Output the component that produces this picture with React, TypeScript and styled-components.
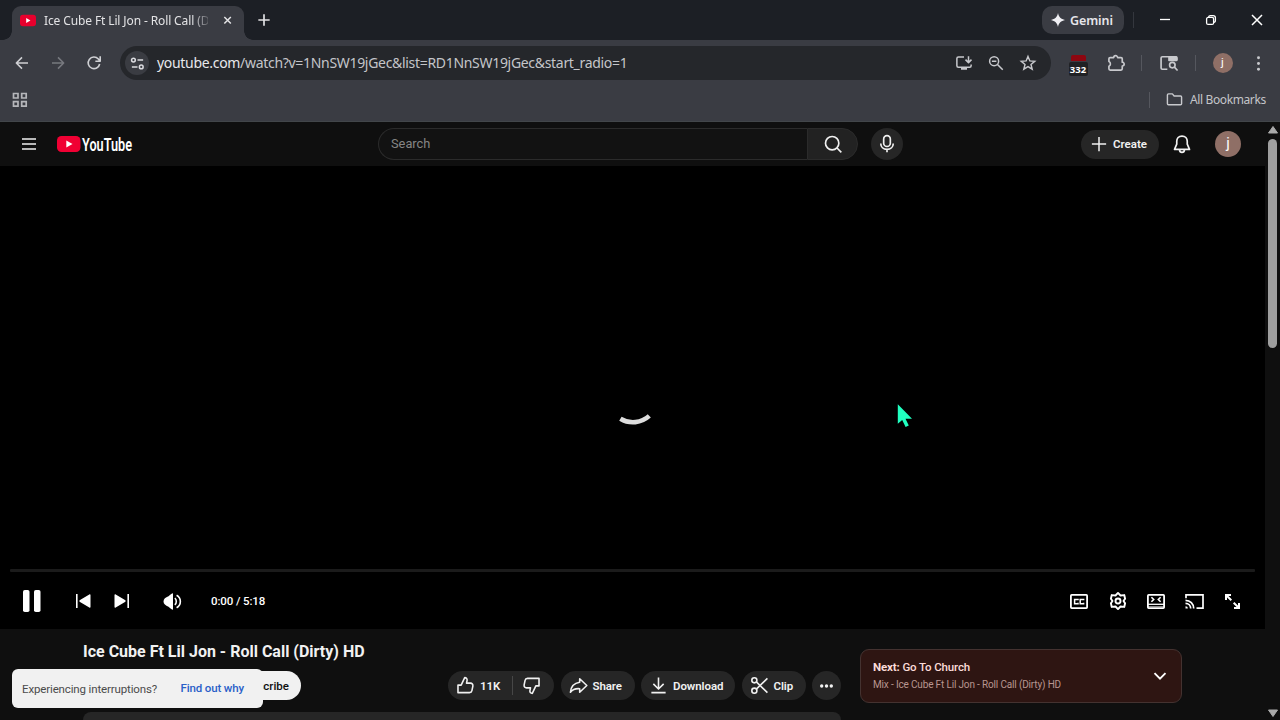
import React from 'react';
import styled, { createGlobalStyle } from 'styled-components';

const Global = createGlobalStyle`
  * { box-sizing: border-box; }
  html, body { margin: 0; padding: 0; background: #0f0f0f; overflow: hidden; }
  svg { display: block; flex: none; overflow: visible; }
`;

const Browser = styled.div`
  position: relative;
  width: 1280px;
  height: 720px;
  overflow: hidden;
  display: flex;
  flex-direction: column;
  color: #e3e3e5;
  font-family: 'Noto Sans', 'Open Sans', sans-serif;
`;

const Spacer = styled.div`
  flex: 1;
`;

const Slot = styled.div<{ $w: number }>`
  width: ${p => p.$w}px;
  flex: none;
  display: flex;
  align-items: center;
  justify-content: center;
`;

const TabStrip = styled.div`
  height: 40px;
  flex: none;
  display: flex;
  align-items: center;
  padding-left: 12px;
  background: #1c1f25;
`;

const Tab = styled.div`
  position: relative;
  align-self: flex-end;
  width: 232px;
  height: 34px;
  padding-left: 8px;
  display: flex;
  align-items: center;
  padding-bottom: 5px;
  background: #3a3c43;
  border-radius: 9px 9px 0 0;
  &::before, &::after {
    content: '';
    position: absolute;
    bottom: 0;
    width: 9px;
    height: 9px;
  }
  &::before { left: -9px; background: radial-gradient(circle at 0 0, transparent 8.5px, #3a3c43 9px); }
  &::after { right: -9px; background: radial-gradient(circle at 100% 0, transparent 8.5px, #3a3c43 9px); }
`;

const TabTitle = styled.div`
  width: 166px;
  margin-left: 8px;
  overflow: hidden;
  white-space: nowrap;
  font-size: 12px;
  line-height: 18px;
  letter-spacing: -0.12px;
  mask-image: linear-gradient(90deg, #000 148px, transparent 168px);
`;

const GeminiButton = styled.div`
  width: 82px;
  height: 28px;
  display: flex;
  align-items: center;
  gap: 5px;
  padding-left: 9px;
  border-radius: 10px;
  background: #3a3c43;
  color: #e6e6ea;
  font-size: 12.5px;
  font-weight: 600;
  letter-spacing: -0.1px;
`;

const Divider = styled.div<{ $h: number; $c?: string }>`
  width: 1px;
  height: ${p => p.$h}px;
  flex: none;
  background: ${p => p.$c || '#55575e'};
`;

const Toolbar = styled.div`
  height: 46px;
  flex: none;
  display: flex;
  align-items: center;
  padding-left: 4px;
  background: #3a3c43;
`;

const Omnibox = styled.div`
  width: 931px;
  flex: none;
  height: 34px;
  margin-left: 8px;
  display: flex;
  align-items: center;
  padding: 0 7px 0 5px;
  border-radius: 17px;
  background: #25272b;
`;

const SiteInfo = styled.div`
  width: 24px;
  height: 24px;
  display: flex;
  align-items: center;
  justify-content: center;
  border-radius: 50%;
  background: #3a3c42;
`;

const Url = styled.div`
  margin-left: 8px;
  padding-bottom: 1px;
  font-size: 14px;
  line-height: 20px;
  letter-spacing: -0.31px;
  white-space: nowrap;
  color: #c4c5c9;
  b { font-weight: 400; color: #e8e8ec; }
`;

const Counter = styled.div`
  display: flex;
  flex-direction: column;
  align-items: center;
  margin-top: 5px;
  &::before {
    content: '';
    width: 15px;
    height: 6px;
    background: #8e0610;
    border-radius: 2px 2px 0 0;
  }
  span {
    width: 19px;
    height: 14px;
    margin-top: 1px;
    text-align: center;
    font: 700 9.5px/15px 'Open Sans', sans-serif;
    color: #fff;
    background: #202124;
    border-radius: 2px;
  }
`;

const Avatar = styled.div<{ $size: number }>`
  width: ${p => p.$size}px;
  height: ${p => p.$size}px;
  display: flex;
  align-items: center;
  justify-content: center;
  border-radius: 50%;
  background: #8f6f66;
  color: #fff;
  font: 400 ${p => p.$size * 0.58}px/1 Roboto, sans-serif;
`;

const BookmarksBar = styled.div`
  height: 36px;
  flex: none;
  display: flex;
  align-items: center;
  padding: 0 14px 8px 12px;
  background: #3a3c43;
  border-bottom: 1px solid #42464a;
  font-size: 12px;
  color: #c4c5c9;
`;

const BookmarksLabel = styled.div`
  width: 76px;
  margin-left: 7px;
  letter-spacing: -0.38px;
  white-space: nowrap;
`;

const Viewport = styled.div`
  flex: 1;
  min-height: 0;
  display: flex;
  background: #0f0f0f;
  font-family: Roboto, sans-serif;
`;

const Page = styled.div`
  width: 1265px;
  display: flex;
  flex-direction: column;
`;

const Scrollbar = styled.div`
  width: 15px;
  display: flex;
  flex-direction: column;
  align-items: center;
  padding: 4px 0 3px;
  background: #0f0f0f;
`;

const Thumb = styled.div`
  width: 9px;
  height: 209px;
  margin-top: 5px;
  border-radius: 5px;
  background: #9f9f9f;
`;

const Masthead = styled.header`
  height: 44px;
  flex: none;
  display: flex;
  align-items: center;
  padding-left: 17px;
`;

const SearchField = styled.div`
  width: 429px;
  height: 32px;
  margin-left: 245px;
  padding: 0 0 2px 12px;
  display: flex;
  align-items: center;
  border: 1px solid #2b2b2b;
  border-right: 0;
  border-radius: 16px 0 0 16px;
  background: #121212;
  color: #858585;
  font-size: 12.8px;
`;

const SearchButton = styled.div`
  width: 51px;
  height: 32px;
  display: flex;
  align-items: center;
  justify-content: center;
  border-radius: 0 16px 16px 0;
  border: 1px solid #2b2b2b;
  background: #222;
`;

const MicButton = styled.div`
  width: 32px;
  height: 32px;
  margin-left: 13px;
  display: flex;
  align-items: center;
  justify-content: center;
  border-radius: 50%;
  background: #262626;
`;

const CreateButton = styled.div`
  width: 78px;
  height: 29px;
  display: flex;
  align-items: center;
  gap: 5px;
  padding: 0 0 1px 9px;
  border-radius: 15px;
  background: #262626;
  color: #f1f1f1;
  font-size: 11.5px;
  font-weight: 600;
`;

const Player = styled.section`
  height: 463px;
  flex: none;
  display: flex;
  flex-direction: column;
  background: #000;
`;

const Stage = styled.div`
  height: 403px;
  display: flex;
  justify-content: center;
  padding-top: 206px;
`;

const Track = styled.div`
  height: 3px;
  margin: 0 10px;
  border-radius: 1px;
  background: #1b1b1b;
`;

const Controls = styled.div`
  height: 57px;
  display: flex;
  align-items: center;
  padding: 1px 14px 0 12px;
  color: #fff;
`;

const Time = styled.div`
  margin-left: 19px;
  padding-bottom: 1px;
  font-size: 11.5px;
  font-weight: 500;
  letter-spacing: -0.12px;
  white-space: nowrap;
`;

const Below = styled.section`
  flex: 1;
  min-height: 0;
  display: flex;
  padding-left: 83px;
`;

const Primary = styled.div`
  width: 758px;
  display: flex;
  flex-direction: column;
  color: #f1f1f1;
`;

const Title = styled.h1`
  height: 22px;
  margin: 12px 0 8px;
  font-size: 16px;
  line-height: 22px;
  font-weight: 700;
  white-space: nowrap;
`;

const Actions = styled.div`
  height: 29px;
  display: flex;
  gap: 6.5px;
`;

const Subscribe = styled.div`
  width: 80px;
  margin: 0 auto 0 138px;
  display: flex;
  align-items: center;
  justify-content: flex-end;
  padding-right: 12px;
  border-radius: 15px;
  background: #f1f1f1;
  color: #0f0f0f;
  font-size: 11.5px;
  font-weight: 500;
`;

const Pill = styled.div<{ $w: number }>`
  width: ${p => p.$w}px;
  flex: none;
  display: flex;
  align-items: center;
  gap: 5px;
  padding-left: 8px;
  border-radius: 15px;
  background: #262626;
  font-size: 11.5px;
  font-weight: 600;
  letter-spacing: -0.08px;
`;

const Description = styled.div`
  height: 8px;
  margin-top: 12px;
  border-radius: 9px 9px 0 0;
  background: #262626;
`;

const NextCard = styled.aside`
  width: 322px;
  height: 54px;
  margin: 20px 0 0 19px;
  padding: 0 14px 0 12px;
  display: flex;
  align-items: center;
  justify-content: space-between;
  border: 1px solid #443230;
  border-radius: 9px;
  background: #2e1512;
`;

const NextTitle = styled.div`
  font-size: 11.5px;
  line-height: 17px;
  font-weight: 500;
  letter-spacing: -0.13px;
  color: #fbdcd8;
  b { font-weight: 700; }
`;

const NextMix = styled.div`
  font-size: 10px;
  line-height: 16px;
  margin-top: 1px;
  letter-spacing: -0.16px;
  color: #b99590;
  white-space: nowrap;
`;

const Toast = styled.div`
  position: absolute;
  left: 12px;
  top: 669px;
  width: 251px;
  height: 39px;
  display: flex;
  align-items: center;
  justify-content: space-between;
  padding: 0 19px 0 10px;
  border-radius: 6px;
  background: #f1f1f1;
  color: #4b4b4b;
  font: 400 11.5px/16px Roboto, sans-serif;
  letter-spacing: -0.14px;
  white-space: nowrap;
  a { color: #2a5fc8; font-weight: 500; padding-bottom: 1px; }
`;

const Cursor = styled.svg`
  position: absolute;
  left: 897px;
  top: 403px;
`;

type IconProps = { s?: number; w?: number; c?: string; children: React.ReactNode };

const Icon = ({ s = 20, w = 2, c = 'currentColor', children }: IconProps) => (
  <svg width={s} height={s} viewBox="0 0 24 24" fill="none" stroke={c} strokeWidth={w} strokeLinejoin="round">
    {children}
  </svg>
);

const PlayBadge = ({ w, h }: { w: number; h: number }) => (
  <svg width={w} height={h} viewBox="0 0 24 17">
    <rect width="24" height="17" rx="4.5" fill="#e8002d" />
    <path d="M9.3 4.8v7.4l6.4-3.7z" fill="#fff" />
  </svg>
);

const App = () => (
  <Browser>
    <Global />
    <TabStrip>
      <Tab>
        <PlayBadge w={16} h={13} />
        <TabTitle>Ice Cube Ft Lil Jon - Roll Call (Dirty) HD</TabTitle>
        <Slot $w={36}>
          <Icon s={13} w={2.8}><path d="M8 5.500l12 12M20 5.500l-12 12" /></Icon>
        </Slot>
      </Tab>
      <Slot $w={40}><Icon s={16} w={2.5}><path d="M12 3.500v17M3.500 12h17" /></Icon></Slot>
      <Spacer />
      <GeminiButton>
        <svg width="14" height="14" viewBox="0 0 24 24"><path d="M12 0c1.500 7 5 10.500 12 12-7 1.500-10.500 5-12 12-1.500-7-5-10.500-12-12C7 10.500 10.500 7 12 0z" fill="#f0f0f4" /></svg>
        Gemini
      </GeminiButton>
      <Slot $w={18}><Divider $h={16} $c="#34373e" /></Slot>
      <Slot $w={46}><svg width="10" height="10"><path d="M0 4.500h10" stroke="#fff" strokeWidth="1.300" /></svg></Slot>
      <Slot $w={46}>
        <svg width="10" height="10" viewBox="0 0 10 10" fill="none" stroke="#fff" strokeWidth="1.300">
          <rect x=".6" y="2.400" width="7" height="7" rx="1.500" />
          <path d="M2.700 2.200C2.700 1 3.400.6 4.400.6h2.800c1.400 0 2.200.8 2.200 2.200v2.800c0 1-.5 1.700-1.600 1.700" />
        </svg>
      </Slot>
      <Slot $w={46}><svg width="10" height="10"><path d="M0 0l10 10M10 0L0 10" stroke="#fff" strokeWidth="1.500" /></svg></Slot>
    </TabStrip>

    <Toolbar>
      <Slot $w={36}><Icon s={16} w={2.3} c="#cfd0d4"><path d="M21 12H3.500M12 3.500L3.500 12l8.500 8.500" /></Icon></Slot>
      <Slot $w={36}><Icon s={16} w={2.3} c="#77797f"><path d="M3 12h17.500M12 3.500l8.500 8.500-8.500 8.500" /></Icon></Slot>
      <Slot $w={36}><Icon s={16} w={2.4} c="#cfd0d4"><path d="M20.500 13.500a8.700 8.700 0 1 1-2-7.500l2.500 2.800M21.300 2v7.300H14" /></Icon></Slot>
      <Omnibox>
        <SiteInfo>
          <Icon s={15} w={2.4} c="#dcdce0"><circle cx="5.500" cy="6.500" r="3" /><path d="M12 6.500h9M3 17.500h9" /><circle cx="18" cy="17.500" r="3" /></Icon>
        </SiteInfo>
        <Url><b>youtube.com</b>/watch?v=1NnSW19jGec&amp;list=RD1NnSW19jGec&amp;start_radio=1</Url>
        <Spacer />
        <Slot $w={32}><Icon s={18} w={2} c="#c8c9cd"><path d="M12 4H4.500C3.300 4 2.500 4.800 2.500 6v9.500c0 1.200.8 2 2 2h15c1.200 0 2-.8 2-2V14M18 3v8M14 7.500l4 4 4-4" /><path d="M8 19.500h8" strokeWidth="3" /></Icon></Slot>
        <Slot $w={32}><Icon s={18} w={2} c="#c8c9cd"><circle cx="9.500" cy="9.500" r="6" /><path d="M14 14l7 7M6.500 9.500h6" /></Icon></Slot>
        <Slot $w={32}><Icon s={18} w={1.9} c="#c8c9cd"><path d="M12 3.200l2.500 6 6.500.5-5 4.200 1.600 6.400L12 16.800l-5.600 3.500L8 13.900 3 9.700l6.500-.5z" strokeLinejoin="miter" /></Icon></Slot>
      </Omnibox>
      <Slot $w={54}><Counter><span>332</span></Counter></Slot>
      <Slot $w={22}><Icon s={20} w={2} c="#c8c9cd"><path d="M3.500 7c0-1 .5-1.500 1.500-1.500h4.300a2.300 2.300 0 0 1 4.600 0H18c1 0 1.500.5 1.500 1.500v4a2.300 2.300 0 0 1 0 4.600V19c0 1-.5 1.500-1.500 1.500H5c-1 0-1.500-.5-1.500-1.500v-3.200a3 3 0 0 0 0-5.500z" /></Icon></Slot>
      <Slot $w={14} />
      <Divider $h={16} />
      <Slot $w={53}>
        <Icon s={20} w={2} c="#c8c9cd"><path d="M10 19.500H4c-1 0-1.500-.6-1.500-1.500V6c0-1 .6-1.500 1.500-1.500h16c1 0 1.500.5 1.500 1.500v3" /><path d="M12 5h9v4h-9z" fill="#c8c9cd" /><circle cx="16" cy="14.500" r="3.300" /><path d="M18.500 17l3.800 4" /></Icon>
      </Slot>
      <Divider $h={16} />
      <Slot $w={53}><Avatar $size={20}>j</Avatar></Slot>
      <Slot $w={18}><Icon s={17} w={0}><g fill="#c8c9cd"><circle cx="12" cy="4" r="2.100" /><circle cx="12" cy="12" r="2.100" /><circle cx="12" cy="20" r="2.100" /></g></Icon></Slot>
    </Toolbar>

    <BookmarksBar>
      <svg width="16" height="16" fill="none" stroke="#b5b6ba" strokeWidth="1.700"><path d="M1.500 1.500h4.500v4.500h-4.500zM9.700 1.500h4.500v4.500h-4.500zM1.500 9.700h4.500v4.500h-4.500zM9.700 9.700h4.500v4.500h-4.500z" /></svg>
      <Spacer />
      <Divider $h={16} />
      <Slot $w={16} />
      <Icon s={17} w={2} c="#c8c9cd"><path d="M2 5.500C2 4.500 2.500 4 3.500 4H9l2.500 3h9c1 0 1.500.5 1.500 1.500V18c0 1-.5 1.500-1.500 1.500h-17C2.500 19.500 2 19 2 18z" /></Icon>
      <BookmarksLabel>All Bookmarks</BookmarksLabel>
    </BookmarksBar>

    <Viewport>
      <Page>
        <Masthead>
          <Slot $w={24}><svg width="14" height="12"><path d="M0 1h14M0 6h14M0 11h14" stroke="#f1f1f1" strokeWidth="1.600" /></svg></Slot>
          <Slot $w={16} />
          <svg width="76" height="18" viewBox="0 0 76 18">
            <rect x="0" y="1" width="23.500" height="16" rx="4.500" fill="#f00033" />
            <path d="M9.300 5.600v6.800l6.200-3.400z" fill="#fff" />
            <text x="25" y="15.600" fontFamily="Roboto, sans-serif" fontSize="18" fontWeight="600" fill="#fff" textLength="50" lengthAdjust="spacingAndGlyphs">YouTube</text>
          </svg>
          <SearchField>Search</SearchField>
          <SearchButton><Icon s={20} w={2} c="#f1f1f1"><circle cx="11" cy="11" r="8" /><path d="M16.800 16.800L22 22" /></Icon></SearchButton>
          <MicButton><Icon s={20} w={2} c="#f1f1f1"><rect x="8" y="2" width="8" height="13" rx="4" /><path d="M4.500 11.500c0 4 3 7 7.500 7s7.500-3 7.500-7M12 18.500V22" /></Icon></MicButton>
          <Spacer />
          <CreateButton><Icon s={18} w={2}><path d="M12 2.500v19M2.500 12h19" /></Icon>Create</CreateButton>
          <Slot $w={45}><Icon s={20} w={2} c="#f1f1f1"><path d="M12 2.500c-4 0-6.300 2.800-6.300 6.300v3.400L3 18.500h18l-2.700-6.300V8.800c0-3.500-2.300-6.300-6.300-6.300zM9 19c.2 2 1.300 3 3 3s2.800-1 3-3" /></Icon></Slot>
          <Slot $w={11} />
          <Avatar $size={26}>j</Avatar>
          <Slot $w={24} />
        </Masthead>

        <Player>
          <Stage>
            <svg width="52" height="52" viewBox="-26 -26 52 52"><path d="M-12.600 20.700A24.300 24.300 0 0 0 16.300 17.900" fill="none" stroke="#ddd" strokeWidth="4.600" /></svg>
          </Stage>
          <Track />
          <Controls>
            <Slot $w={40}><svg width="18" height="22" fill="#fff"><rect width="6.500" height="22" rx="1.800" /><rect x="11" width="6.500" height="22" rx="1.800" /></svg></Slot>
            <Slot $w={12} />
            <Slot $w={38}><svg width="15" height="14"><path d="M.8 0v14" stroke="#fff" strokeWidth="1.600" /><path d="M14.500 1v12c0 .8-.6 1-1.200.6L4 8c-.9-.6-.9-1.400 0-2L13.300.4c.6-.4 1.200-.2 1.200.6z" fill="#fff" /></svg></Slot>
            <Slot $w={39}><svg width="15" height="14"><path d="M14.200 0v14" stroke="#fff" strokeWidth="1.600" /><path d="M.5 1v12c0 .8.600 1 1.200.6L11 8c.9-.6.9-1.400 0-2L1.700.4C1.100 0 .5.2.5 1z" fill="#fff" /></svg></Slot>
            <Slot $w={12} />
            <Slot $w={39}><svg width="19" height="17" viewBox="0 0 19 17" fill="none" stroke="#fff" strokeWidth="1.600"><path d="M10 .3v16.400c-1 0-2.300-1-4.500-3C2.500 12.500.5 11 .5 8.500S2.500 4.500 5.500 3.300C7.700 1.300 9 .3 10 .3z" fill="#fff" stroke="none" /><path d="M11.800 5.200c2 1.500 2 5.100 0 6.600M13.600 2.200c5 2.800 5 9.800 0 12.600" /></svg></Slot>
            <Time>0:00 / 5:18</Time>
            <Spacer />
            <Slot $w={38}>
              <svg width="18" height="15" fill="none" stroke="#fff" strokeWidth="1.800"><rect x=".9" y=".9" width="16.200" height="13.200" rx=".8" /><path d="M8 6.300V5.400H4.600v4.300H8v-.9M13.600 6.300v-.9h-3.400v4.300h3.400v-.9" strokeWidth="1.500" /></svg>
            </Slot>
            <Slot $w={39}>
              <Icon s={20} w={2.3}><path d="M12 2.300l3 3.100 4.500-.5 1 4.300L18.600 12l1.900 2.800-1 4.300-4.500-.5-3 3.100-3-3.100-4.500.5-1-4.300L5.400 12 3.500 9.200l1-4.300 4.500.5z" /><circle cx="12" cy="12" r="3" /></Icon>
            </Slot>
            <Slot $w={38}>
              <svg width="18" height="15" fill="none" stroke="#fff" strokeWidth="1.800"><rect x=".9" y=".9" width="16.200" height="13.200" rx=".8" /><path d="M1 10.300h16" strokeWidth="1.300" /><path d="M1 12.600h16" strokeWidth="1" opacity=".6" /><path d="M4.400 3.200l2.300 2.300-2.300 2.300M13.600 3.200l-2.300 2.300 2.300 2.300" strokeWidth="1.600" /></svg>
            </Slot>
            <Slot $w={39}>
              <svg width="19" height="15" fill="none" stroke="#fff" strokeWidth="1.700"><path d="M1 4.200V.9h17v13.200h-6.500M.5 6.300c4.700 0 8.200 3.500 8.200 8.200M.5 9.300c3 0 5.200 2.200 5.200 5.200" /><path d="M.5 12.200c1.400 0 2.300.9 2.300 2.300H.5z" fill="#fff" stroke="none" /></svg>
            </Slot>
            <Slot $w={37}>
              <svg width="15" height="15" fill="none" stroke="#fff" strokeWidth="2"><path d="M1 6V1h5M1 1l5.300 5.300M14 9v5H9M14 14L8.700 8.700" /></svg>
            </Slot>
          </Controls>
        </Player>

        <Below>
          <Primary>
            <Title>Ice Cube Ft Lil Jon - Roll Call (Dirty) HD</Title>
            <Actions>
              <Subscribe>Subscribe</Subscribe>
              <Pill $w={106}>
                <Icon s={19}><path d="M2.500 11.500h4L11 2c2.200 0 3.300 1.600 3 3.500L13.300 9h5c2 0 3.400 1.700 3 3.700l-1.200 5.800c-.3 1.600-1.500 2.500-3.100 2.500H2.500z" /></Icon>
                11K
                <Slot $w={15}><Divider $h={19} $c="#474747" /></Slot>
                <Slot $w={12}><Icon s={19}><path d="M21.500 12.500h-4L13 22c-2.200 0-3.300-1.600-3-3.500l.7-3.500h-5c-2 0-3.400-1.700-3-3.700l1.200-5.800C4.200 3.900 5.400 3 7 3h14.500z" /></Icon></Slot>
              </Pill>
              <Pill $w={74}>
                <Icon s={19}><path d="M13.500 3.500L22.500 12l-9 8.500V16C8 15.500 4.500 17 1.800 20.500 2.500 13.500 6.500 9 13.500 8z" /></Icon>
                Share
              </Pill>
              <Pill $w={94}>
                <Icon s={19}><path d="M12 2v14M5.500 10l6.500 6.500 6.500-6.500M3 21h18" /></Icon>
                Download
              </Pill>
              <Pill $w={64}>
                <Icon s={19}><circle cx="5.500" cy="5.500" r="3.200" /><circle cx="5.500" cy="18.500" r="3.200" /><path d="M8 7.500L22 21M8 16.500L22 3" /></Icon>
                Clip
              </Pill>
              <Pill $w={29}>
                <svg width="13" height="4" fill="#f1f1f1"><circle cx="1.700" cy="2" r="1.700" /><circle cx="6.500" cy="2" r="1.700" /><circle cx="11.300" cy="2" r="1.700" /></svg>
              </Pill>
            </Actions>
            <Description />
          </Primary>
          <NextCard>
            <div>
              <NextTitle><b>Next:</b> Go To Church</NextTitle>
              <NextMix>Mix - Ice Cube Ft Lil Jon - Roll Call (Dirty) HD</NextMix>
            </div>
            <svg width="14" height="8"><path d="M1.500 1.200L7 6.700l5.500-5.500" fill="none" stroke="#fff" strokeWidth="1.900" /></svg>
          </NextCard>
        </Below>
      </Page>
      <Scrollbar>
        <svg width="10" height="8"><path d="M5 .5L9.500 7h-9z" fill="#aaa" stroke="#aaa" strokeLinejoin="round" /></svg>
        <Thumb />
        <Spacer />
        <svg width="10" height="8"><path d="M5 7.500L.5 1h9z" fill="#aaa" stroke="#aaa" strokeLinejoin="round" /></svg>
      </Scrollbar>
    </Viewport>

    <Toast>Experiencing interruptions?<a>Find out why</a></Toast>
    <Cursor width="17" height="25" viewBox="0 0 17 25"><path d="M.8 1.200v19.500l4.400-3.700 3.400 7 3.200-1.500-3.300-6.800h6.500z" fill="#20ffc0" /></Cursor>
  </Browser>
);

export default App;
